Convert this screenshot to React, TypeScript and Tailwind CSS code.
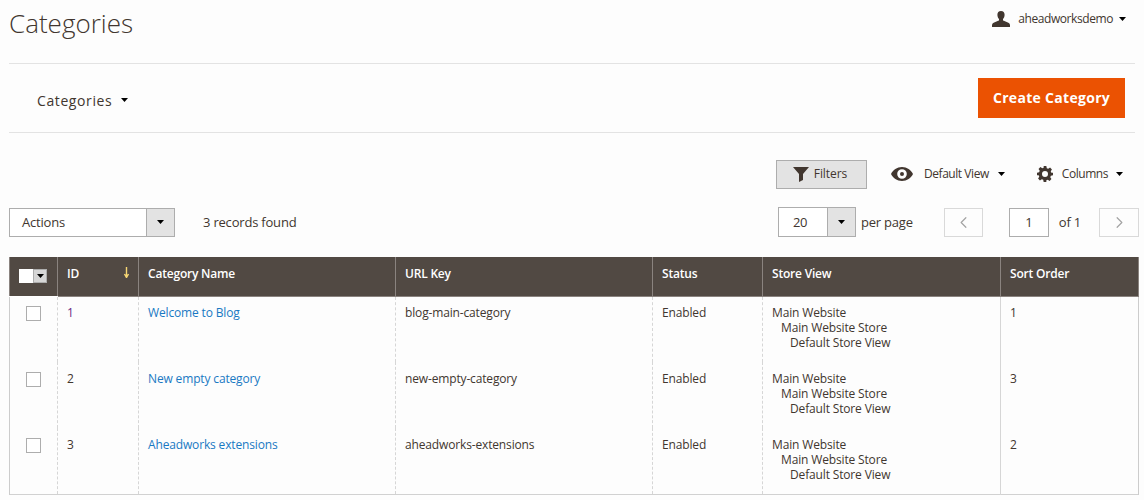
import React from "react";
import { ChevronLeft, ChevronRight } from "lucide-react";

const Caret = ({ className = "" }: { className?: string }) => (
  <svg width="7" height="4" viewBox="0 0 7 4" className={className}>
    <path d="M0 0H7L3.5 4Z" fill="#000" />
  </svg>
);

const Th = ({ children, last = false }: { children: React.ReactNode; last?: boolean }) => (
  <th className={`h-[39px] border-b border-l border-[#8a837f] px-[9px] pb-[5px] text-left align-middle text-[12px] font-semibold tracking-[-0.2px] text-white ${last ? "border-r" : ""}`}>
    {children}
  </th>
);

const Td = ({ children, first }: { children: React.ReactNode; first: boolean }) => (
  <td className={`h-[66px] border-l border-dashed border-[#d6d6d6] px-[9px] align-top text-[12px] leading-[15px] tracking-[-0.15px] ${first ? "pt-[8px]" : "pt-[9px]"}`}>{children}</td>
);

const rows = [
  { id: "1", name: "Welcome to Blog", key: "blog-main-category", order: "1", idc: "text-[#6b2a86]" },
  { id: "2", name: "New empty category", key: "new-empty-category", order: "3", idc: "" },
  { id: "3", name: "Aheadworks extensions", key: "aheadworks-extensions", order: "2", idc: "" },
];

export default function App() {
  return (
    <div className="h-[500px] w-[1144px] overflow-hidden bg-[#fdfdfd] text-[#41362f]" style={{ fontFamily: '"Open Sans", sans-serif' }}>
      <div className="mx-[9px] flex h-[64px] justify-between border-b border-[#e3e3e3]">
        <h1 className="pt-[4px] text-[26px] leading-[38px] font-light">Categories</h1>
        <div className="mr-[9px] flex h-[38px] items-center text-[12px] tracking-[-0.42px]">
          <svg width="18" height="16" viewBox="0 0 18 16" className="mr-[8px]">
            <path d="M9 0C6.600 0 5.400 1.600 5.400 3.800c0 1.800.7 3.400 1.600 4.300v1.500C5 10.600 0 11.400 0 14.200V16h18v-1.800c0-2.800-5-3.600-7-4.600V8.100c.9-.9 1.600-2.500 1.600-4.300C12.600 1.600 11.400 0 9 0Z" fill="#41362f" />
          </svg>
          <span>aheadworksdemo</span>
          <Caret className="ml-[6px]" />
        </div>
      </div>

      <div className="mx-[9px] flex h-[69px] items-center justify-between border-b border-[#e3e3e3]">
        <div className="mt-[4px] ml-[28px] flex items-center text-[14px] tracking-[0.6px]">
          <span>Categories</span>
          <Caret className="ml-[9px]" />
        </div>
        <button className="mt-[-1px] mr-[10px] flex h-[40px] w-[147px] items-center justify-center bg-[#eb5202] text-[14px] font-bold tracking-[0.3px] text-white">
          Create Category
        </button>
      </div>

      <div className="mx-[9px] mt-[27px] flex h-[28px] items-center justify-end pr-[12px] text-[12px] tracking-[-0.45px]">
        <button className="flex h-[29px] w-[91px] items-center justify-center gap-[5px] border border-[#adadad] bg-[#e3e3e3] pr-[3px] font-normal tracking-[-0.05px]">
          <svg width="16" height="15" viewBox="0 0 16 15"><path d="M0 0H16L10 7V13L6 15V7Z" fill="#41362f" /></svg>
          <span className="mt-[-1px]">Filters</span>
        </button>
        <svg width="22" height="14" viewBox="0 0 22 14" className="ml-[24px]">
          <path fillRule="evenodd" d="M11 0C6 0 2 3 0 7c2 4 6 7 11 7s9-3 11-7c-2-4-6-7-11-7Zm0 2.200a4.800 4.800 0 1 1 0 9.600 4.800 4.800 0 0 1 0-9.600ZM11 5a2 2 0 1 0 0 4 2 2 0 0 0 0-4Z" fill="#41362f" />
        </svg>
        <span className="ml-[11px]">Default View</span>
        <Caret className="ml-[9px]" />
        <svg width="16" height="16" viewBox="0 0 24 24" className="ml-[32px]">
          <path fillRule="evenodd" fill="#41362f" d="M10 0h4l.7 3.200 2.100.9L19.600 2.300l2.800 2.800-1.800 2.800.9 2.100 2.500.0v4l-3.200.7-.9 2.100 1.800 2.800-2.800 2.800-2.800-1.800-2.100.9L14 24h-4l-.7-3.200-2.100-.9-2.800 1.800-2.800-2.800 1.800-2.800-.9-2.100L0 14v-4l3.200-.7.9-2.100-1.800-2.800 2.800-2.800 2.800 1.800 2.100-.9ZM12 7.500a4.500 4.500 0 1 0 0 9 4.500 4.500 0 0 0 0-9Z" />
        </svg>
        <span className="ml-[9px]">Columns</span>
        <Caret className="ml-[8px]" />
      </div>

      <div className="mx-[9px] mt-[19px] flex h-[30px] items-center text-[13px] tracking-[-0.2px]">
        <div className="flex h-[29px] w-[166px] border border-[#adadad] bg-white">
          <span className="flex flex-1 items-center pt-[1px] pl-[12px] text-[13px]">Actions</span>
          <span className="flex w-[28px] items-center justify-center border-l border-[#adadad] bg-[#e3e3e3]"><Caret /></span>
        </div>
        <span className="mt-[1px] ml-[28px]">3 records found</span>
        <div className="ml-auto mr-[-4px] flex items-center">
          <div className="flex h-[30px] w-[78px] border border-[#adadad] bg-white">
            <span className="flex flex-1 items-center pt-[1px] pl-[14px]">20</span>
            <span className="flex w-[28px] items-center justify-center border-l border-[#adadad] bg-[#e3e3e3]"><Caret /></span>
          </div>
          <span className="mt-[1px] ml-[5px]">per page</span>
          <span className="ml-[31px] flex h-[29px] w-[39px] items-center justify-center border border-[#d9d9d9] text-[#a3a3a3]"><ChevronLeft size={19} strokeWidth={1.5} /></span>
          <span className="ml-[26px] flex h-[29px] w-[40px] items-center justify-center border border-[#adadad] bg-white pt-[1px]">1</span>
          <span className="mt-[1px] ml-[10px]">of 1</span>
          <span className="ml-[18px] flex h-[29px] w-[40px] items-center justify-center border border-[#d9d9d9] text-[#a3a3a3]"><ChevronRight size={19} strokeWidth={1.5} /></span>
        </div>
      </div>

      <table className="mx-[9px] mt-[20px] w-[1129px] table-fixed border-collapse">
        <colgroup>
          <col className="w-[48px]" />
          <col className="w-[81px]" />
          <col className="w-[257px]" />
          <col className="w-[257px]" />
          <col className="w-[110px]" />
          <col className="w-[238px]" />
          <col className="w-[138px]" />
        </colgroup>
        <thead>
          <tr className="bg-[#514943]">
            <th className="h-[39px] border-b border-l border-b-white border-l-[#8a837f] align-middle">
              <div className="ml-[9px] flex h-[14px] w-[28px] bg-white">
                <span className="w-[14px]" />
                <span className="flex w-[14px] items-center justify-center border border-[#adadad] bg-[#d6d6d6]"><Caret /></span>
              </div>
            </th>
            <th className="h-[39px] border-b border-l border-[#8a837f] px-[9px] pb-[5px] text-left text-[12px] font-semibold tracking-[-0.2px] text-white">
              <div className="flex items-center justify-between">
                <span>ID</span>
                <svg width="7" height="11" viewBox="0 0 7 11" className="mr-[-1px] mt-[-2px]">
                  <path d="M3.500 0V9.500M1.500 7L3.500 10.500L5.500 7" fill="none" stroke="#f7d774" strokeWidth="1.400" />
                </svg>
              </div>
            </th>
            <Th>Category Name</Th>
            <Th>URL Key</Th>
            <Th>Status</Th>
            <Th>Store View</Th>
            <Th last>Sort Order</Th>
          </tr>
        </thead>
        <tbody>
          {rows.map((r, i) => (
            <tr key={r.id} className={i === 2 ? "border-b border-[#d1d1d1]" : ""}>
              <td className={`h-[66px] border-l border-[#cccccc] align-top ${i === 0 ? "pt-[9px]" : "pt-[10px]"}`}>
                <div className="mx-auto h-[15px] w-[15px] border border-[#adadad] bg-white" />
              </td>
              <Td first={i === 0}><span className={r.idc}>{r.id}</span></Td>
              <Td first={i === 0}><span className="text-[#1979c3]">{r.name}</span></Td>
              <Td first={i === 0}>{r.key}</Td>
              <Td first={i === 0}>Enabled</Td>
              <Td first={i === 0}>
                <div>Main Website</div>
                <div className="pl-[9px]">Main Website Store</div>
                <div className="pl-[18px]">Default Store View</div>
              </Td>
              <td className={`h-[66px] border-r border-l border-r-[#cccccc] border-l-[#d6d6d6] border-l-dashed px-[9px] align-top text-[12px] leading-[15px] ${i === 0 ? "pt-[8px]" : "pt-[9px]"}`}>{r.order}</td>
            </tr>
          ))}
        </tbody>
      </table>
    </div>
  );
}
